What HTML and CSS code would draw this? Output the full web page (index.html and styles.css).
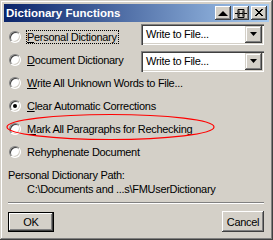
FILE: index.html
```html
<!DOCTYPE html>
<html>
<head>
<meta charset="utf-8">
<link rel="stylesheet" href="styles.css">
</head>
<body>
<div class="window">
  <div class="titlebar">
    <span class="title">Dictionary Functions</span>
    <div class="tbuttons">
      <div class="tbtn"><svg width="16" height="14" viewBox="0 0 16 14"><polygon points="3,10 13,10 8,5" fill="#000"/></svg></div>
      <div class="tbtn"><svg width="16" height="14" viewBox="0 0 16 14"><path d="M2 7.5H5M11 7.5H14M5 3.5H11V11.5H5Z" stroke="#000" fill="none"/><path d="M6 4.5V10.5M10 4.5V10.5M6 7.5H10" stroke="#000"/></svg></div>
      <div class="tbtn close"><svg width="16" height="14" viewBox="0 0 16 14"><path d="M4 3L11 10M5 3L12 10M11 3L4 10M12 3L5 10" stroke="#000" stroke-width="1"/></svg></div>
    </div>
  </div>
  <div class="content">
    <div class="row">
      <span class="radio"></span>
      <span class="label focus"><u>P</u>ersonal Dictionary</span>
      <div class="select sel1"><span class="seltext">Write to File...</span><span class="arrow"><svg width="7" height="4" viewBox="0 0 7 4"><polygon points="0,0 7,0 3.5,4" fill="#000"/></svg></span></div>
    </div>
    <div class="row">
      <span class="radio"></span>
      <span class="label"><u>D</u>ocument Dictionary</span>
      <div class="select sel2"><span class="seltext">Write to File...</span><span class="arrow"><svg width="7" height="4" viewBox="0 0 7 4"><polygon points="0,0 7,0 3.5,4" fill="#000"/></svg></span></div>
    </div>
    <div class="row">
      <span class="radio"></span>
      <span class="label"><u>W</u>rite All Unknown Words to File...</span>
    </div>
    <div class="row">
      <span class="radio checked"></span>
      <span class="label"><u>C</u>lear Automatic Corrections</span>
    </div>
    <div class="row marked">
      <span class="radio"></span>
      <span class="label"><u>M</u>ark All Paragraphs for Rechecking</span>
      <svg class="ellipse" width="212" height="30" viewBox="0 0 212 30"><ellipse cx="104.5" cy="14" rx="103.5" ry="12.5" fill="none" stroke="#ff0000" stroke-width="1.2"/></svg>
    </div>
    <div class="row">
      <span class="radio"></span>
      <span class="label">Rehyphenate Document</span>
    </div>
    <div class="path">
      <div>Personal Dictionary Path:</div>
      <div class="pathval">C:\Documents and ...s\FMUserDictionary</div>
    </div>
    <div class="sep"></div>
    <div class="buttons">
      <div class="btn default">OK</div>
      <div class="btn cancel">Cancel</div>
    </div>
  </div>
</div>
</body>
</html>
```
FILE: styles.css
```css
html, body {
  margin: 0;
  padding: 0;
  background: #d4d0c8;
}
.window {
  width: 273px;
  height: 240px;
  box-sizing: border-box;
  background: #d4d0c8;
  padding: 4px;
  box-shadow: inset -1px -1px 0 #404040, inset 1px 1px 0 #d4d0c8, inset -2px -2px 0 #808080, inset 2px 2px 0 #ffffff;
  font-family: "Liberation Sans", Arial, sans-serif;
  font-size: 11px;
  letter-spacing: -0.3px;
  color: #000;
  display: flex;
  flex-direction: column;
}
.titlebar {
  height: 18px;
  flex: none;
  background: linear-gradient(to right, #0a246a, #a6caf0);
  display: flex;
  align-items: center;
  justify-content: space-between;
  padding: 0 2px 0 2px;
}
.title {
  color: #fff;
  font-weight: bold;
  font-size: 11.5px;
  letter-spacing: 0;
}
.tbuttons {
  display: flex;
  gap: 2px;
}
.tbtn {
  width: 16px;
  height: 14px;
  background: #d4d0c8;
  box-shadow: inset -1px -1px 0 #404040, inset 1px 1px 0 #ffffff, inset -2px -2px 0 #808080;
  display: flex;
}
.content {
  flex: 1;
  display: flex;
  flex-direction: column;
  padding: 3px 5px 0 4px;
}
.row {
  height: 23px;
  flex: none;
  display: flex;
  align-items: center;
  position: relative;
}
.radio {
  width: 12px;
  height: 12px;
  border-radius: 50%;
  box-sizing: border-box;
  background: #fff;
  margin-left: 1px;
  margin-right: 6px;
  border: 1px solid;
  border-color: #808080 #ffffff #ffffff #808080;
  box-shadow: inset 1px 1px 0 #404040, inset -1px -1px 0 #d4d0c8;
  position: relative;
  flex: none;
}
.radio.checked::after {
  content: "";
  position: absolute;
  left: 3px;
  top: 3px;
  width: 4px;
  height: 4px;
  border-radius: 50%;
  background: #000;
}
.label {
  white-space: nowrap;
}
.label.focus {
  outline: 1px dotted #000;
  outline-offset: 0;
  padding: 0 1px 0 0;
}
.select {
  margin-left: auto;
  width: 123px;
  height: 21px;
  box-sizing: border-box;
  background: #fff;
  box-shadow: inset 1px 1px 0 #808080, inset 2px 2px 0 #404040, inset -1px -1px 0 #ffffff, inset -2px -2px 0 #d4d0c8;
  display: flex;
  align-items: center;
  padding: 2px;
}
.sel1 { margin-bottom: 5px; }
.sel2 { margin-top: 3px; }
.seltext {
  flex: 1;
  padding-left: 3px;
}
.arrow {
  width: 17px;
  height: 17px;
  box-sizing: border-box;
  background: #d4d0c8;
  box-shadow: inset -1px -1px 0 #404040, inset 1px 1px 0 #d4d0c8, inset -2px -2px 0 #808080, inset 2px 2px 0 #ffffff;
  display: flex;
  align-items: center;
  justify-content: center;
}
.ellipse {
  position: absolute;
  left: -2px;
  top: -4px;
}
.path {
  margin-top: 5px;
  line-height: 14px;
}
.pathval {
  padding-left: 19px;
}
.sep {
  margin-top: 6px;
  height: 0;
  border-top: 1px solid #808080;
  border-bottom: 1px solid #ffffff;
}
.buttons {
  display: flex;
  justify-content: space-between;
  align-items: flex-start;
  margin-top: 7px;
}
.btn {
  height: 21px;
  box-sizing: border-box;
  display: flex;
  align-items: center;
  justify-content: center;
  background: #d4d0c8;
  box-shadow: inset -1px -1px 0 #404040, inset 1px 1px 0 #ffffff, inset -2px -2px 0 #808080, inset 2px 2px 0 #d4d0c8;
}
.btn.default {
  width: 46px;
  border: 1px solid #000;
  margin-top: 1px;
  height: 20px;
}
.btn.cancel {
  width: 42px;
}
```
